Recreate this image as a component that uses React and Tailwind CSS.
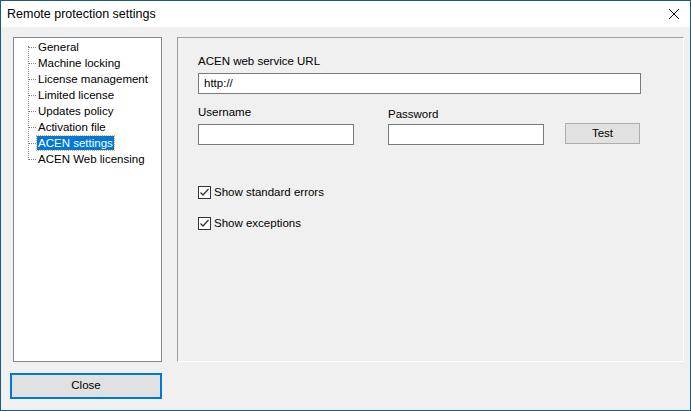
export default function App() {
  const items = ["General","Machine locking","License management","Limited license","Updates policy","Activation file","ACEN settings","ACEN Web licensing"];
  const Check = () => (
    <span className="w-[13px] h-[13px] border border-[#333] bg-white flex items-center justify-center">
      <svg width="11" height="11" viewBox="0 0 11 11"><path d="M1.5 5.5 L4 8 L9.5 2" fill="none" stroke="#333" strokeWidth="1.3"/></svg>
    </span>
  );
  return (
    <div className="w-[691px] h-[411px] border border-[#1b5b7c] bg-[#f0f0f0] flex flex-col text-[11.5px] text-black" style={{fontFamily:'"Liberation Sans", Arial, sans-serif'}}>
      <div className="h-[26px] bg-white flex items-center justify-between pl-[6px] pr-[10px]">
        <span className="text-[12.5px]">Remote protection settings</span>
        <svg width="12" height="12" viewBox="0 0 12 12"><path d="M1 1 L11 11 M11 1 L1 11" stroke="#000" strokeWidth="1"/></svg>
      </div>
      <div className="flex pt-[10px] pl-[12px] gap-[15px]">
        <div className="w-[149px] h-[325px] border border-[#828790] bg-white relative pt-[1px]">
          <div className="absolute left-[14px] top-[8px] h-[114px] border-l border-dotted border-[#888]"></div>
          {items.map((t,i)=>(
            <div key={t} className="h-[16px] flex items-center relative">
              <div className="absolute left-[14px] w-[8px] top-[8px] border-t border-dotted border-[#888]"></div>
              <span className={"ml-[23px] px-[1px] leading-[14px] " + (i===6 ? "bg-[#0078d7] text-white outline-1 outline-dotted outline-[#f0b040]" : "")}>{t}</span>
            </div>
          ))}
        </div>
        <div className="w-[507px] h-[325px] border-l border-t border-[#a0a0a0] border-r border-b border-r-white border-b-white pl-[20px] pt-[16px]">
          <div className="leading-[14px]">ACEN web service URL</div>
          <div className="mt-[5px] w-[443px] h-[21px] border border-[#7a7a7a] bg-white flex items-center pl-[5px]">http://</div>
          <div className="flex mt-[11px]">
            <div className="w-[156px]">
              <div className="leading-[14px]">Username</div>
              <div className="mt-[5px] h-[21px] border border-[#7a7a7a] bg-white"></div>
            </div>
            <div className="w-[156px] ml-[34px] mt-[2px]">
              <div className="leading-[14px]">Password</div>
              <div className="mt-[3px] h-[21px] border border-[#7a7a7a] bg-white"></div>
            </div>
            <div className="ml-[21px] mt-[18px] w-[75px] h-[21px] border border-[#adadad] bg-[#e1e1e1] flex items-center justify-center">Test</div>
          </div>
          <div className="flex items-center gap-[3px] mt-[39px]"><Check/><span>Show standard errors</span></div>
          <div className="flex items-center gap-[3px] mt-[14px]"><Check/><span>Show exceptions</span></div>
        </div>
      </div>
      <div className="ml-[9px] mt-[11px] w-[152px] h-[26px] border-2 border-[#0078d7] bg-[#e1e1e1] flex items-center justify-center">Close</div>
    </div>
  );
}
